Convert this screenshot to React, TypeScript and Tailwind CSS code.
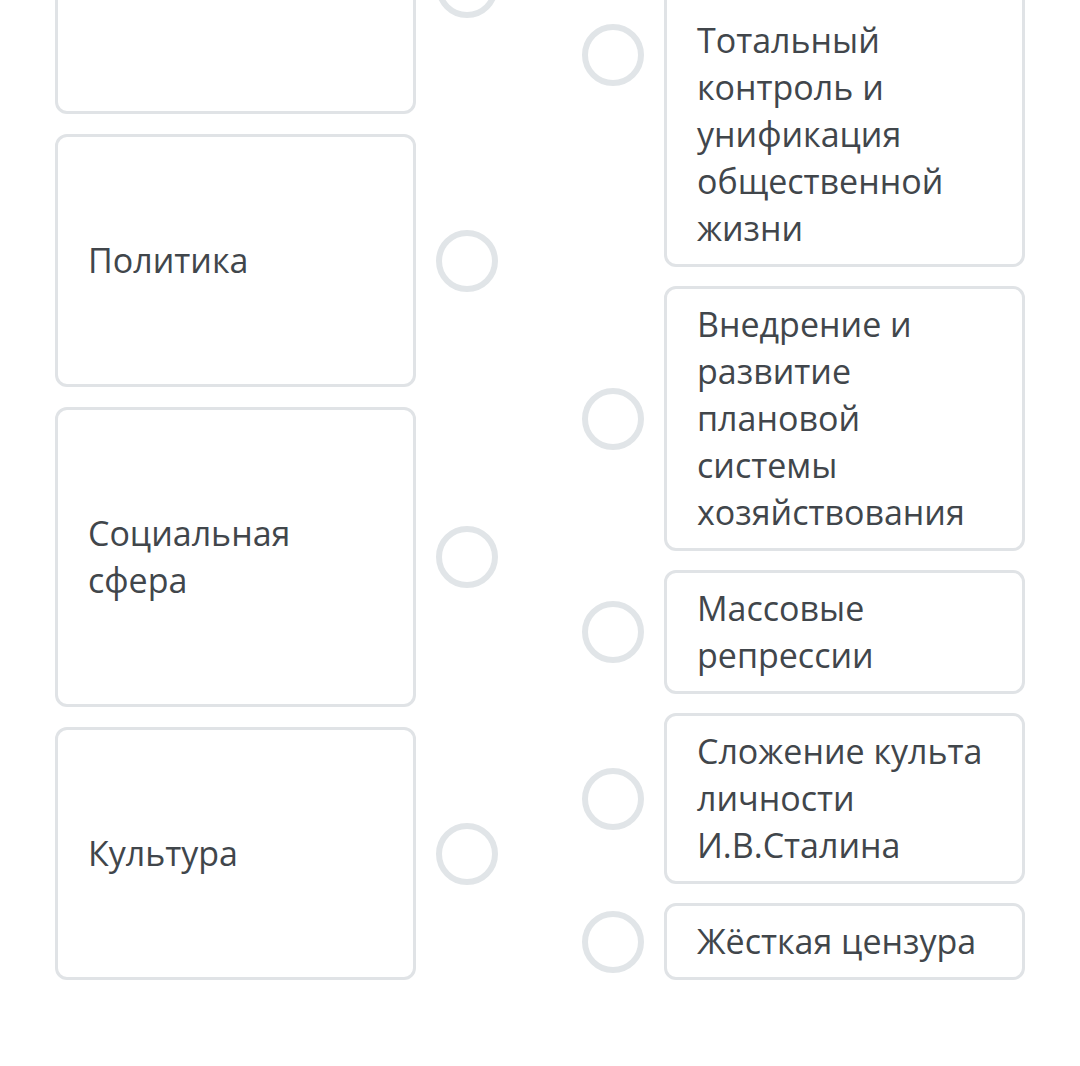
const leftItems = [
  { id: "econ", text: ["Экономика"] },
  { id: "pol", text: ["Политика"] },
  { id: "soc", text: ["Социальная", "сфера"] },
  { id: "cult", text: ["Культура"] },
]

const rightItems = [
  { id: "b", text: ["Внедрение и", "развитие", "плановой", "системы", "хозяйствования"] },
  { id: "c", text: ["Массовые", "репрессии"] },
  { id: "d", text: ["Сложение культа", "личности", "И.В.Сталина"] },
  { id: "e", text: ["Жёсткая цензура"] },
]

function Circle({ className = "" }: { className?: string }) {
  return (
    <div
      className={`w-[62px] h-[62px] shrink-0 rounded-full border-[6px] border-[#e1e5e8] bg-white ${className}`}
    />
  )
}

function Lines({ lines }: { lines: string[] }) {
  return (
    <div>
      {lines.map((l) => (
        <div key={l} className="whitespace-nowrap">{l}</div>
      ))}
    </div>
  )
}

export default function App() {
  return (
    <div
      className="w-[1080px] h-[1066px] overflow-hidden bg-white text-[34px] leading-[47px] text-[#41464b]"
      style={{ fontFamily: '"Open Sans", "Noto Sans", sans-serif' }}
    >
      <div className="flex pl-[55px]">
        {/* left side */}
        <div className="flex flex-col gap-[20px] mt-[-141px]">
          {leftItems.map((item, i) => (
            <div key={item.id} className="flex items-center gap-[20px]">
              <div
                className={`w-[361px] border-[3px] border-[#e0e3e6] rounded-[12px] px-[30px] ${
                  i === 0 ? "pt-[100px] pb-[102px]" : "py-[100px]"
                }`}
              >
                <Lines lines={item.text} />
              </div>
              <Circle />
            </div>
          ))}
        </div>

        {/* right side */}
        <div className="flex flex-col gap-[19px] ml-[84px] mt-[-30px]">
          <div className="flex items-start gap-[20px]">
            <Circle className="mt-[54px]" />
            <div className="w-[361px] border-[3px] border-[#e0e3e6] rounded-[12px] px-[30px] pt-[44px] pb-[12px]">
              <Lines lines={["Тотальный", "контроль и", "унификация", "общественной", "жизни"]} />
            </div>
          </div>
          {rightItems.map((item) => (
            <div key={item.id} className="flex items-center gap-[20px]">
              <Circle />
              <div className="w-[361px] border-[3px] border-[#e0e3e6] rounded-[12px] px-[30px] py-[12px]">
                <Lines lines={item.text} />
              </div>
            </div>
          ))}
        </div>
      </div>
    </div>
  )
}
